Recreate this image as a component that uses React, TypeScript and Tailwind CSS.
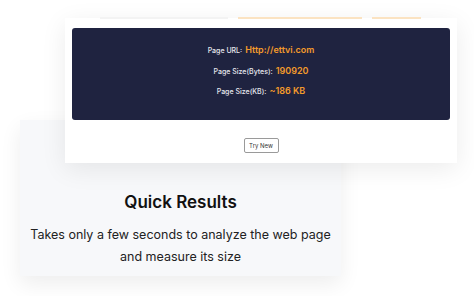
import React from "react";

const rows = [
  { label: "Page URL:", value: "Http://ettvi.com" },
  { label: "Page Size(Bytes):", value: "190920" },
  { label: "Page Size(KB):", value: "~186 KB" },
];

const App = () => {
  return (
    <div
      className="w-[474px] h-[296px] overflow-hidden bg-white pt-[18px]"
      style={{ fontFamily: "Inter, 'Noto Sans', sans-serif" }}
    >
      {/* result card */}
      <div className="relative z-10 ml-[65px] w-[392px] h-[145px] bg-white shadow-[0_6px_24px_rgba(0,0,0,0.08)] flex flex-col">
        <div className="absolute -top-[1px] left-0 right-0 h-[2px]">
          <div className="absolute left-[35px] w-[128px] h-[2px] bg-[#f3f3f3]" />
          <div className="absolute left-[173px] w-[124px] h-[2px] bg-[#fbe3c2]" />
          <div className="absolute left-[307px] w-[49px] h-[2px] bg-[#fbe3c2]" />
        </div>
        <div className="mx-[7px] mt-[10px] h-[92px] rounded-[3px] bg-[#1f2340] flex flex-col items-center justify-center gap-[6.5px] pb-[7px]">
          {rows.map((r) => (
            <div key={r.label} className="flex items-baseline gap-[3px] h-[14px]">
              <span className="text-[7px] text-[#e8e8ef] font-medium">{r.label}</span>
              <span className="text-[9px] text-[#f39a2b] font-semibold">{r.value}</span>
            </div>
          ))}
        </div>
        <div className="flex justify-center mt-[18px]">
          <button className="w-[35px] h-[15px] border border-[#9a9a9a] rounded-[2px] text-[6px] text-[#333] bg-white flex items-center justify-center">
            Try New
          </button>
        </div>
      </div>

      {/* feature card */}
      <div className="-mt-[43px] ml-[20px] w-[321px] h-[156px] bg-[#f7f8fa] shadow-[0_8px_20px_rgba(0,0,0,0.07)] flex flex-col items-center pt-[70px]">
        <h2 className="text-[17px] leading-[24px] font-semibold text-[#111]">Quick Results</h2>
        <p className="mt-[10px] text-[12.5px] leading-[22px] text-[#222] text-center">
          Takes only a few seconds to analyze the web page
          <br />
          and measure its size
        </p>
      </div>
    </div>
  );
};

export default App;
